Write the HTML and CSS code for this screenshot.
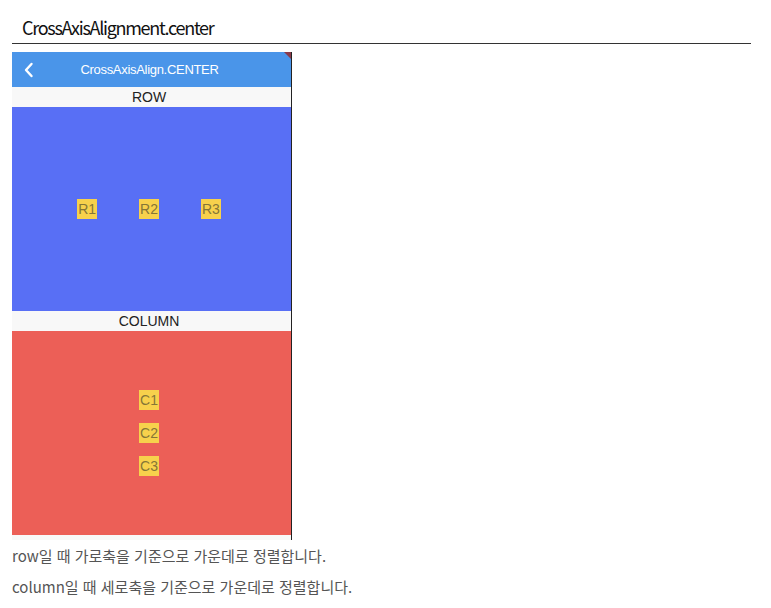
FILE: index.html
```html
<!DOCTYPE html>
<html lang="ko">
<head>
<meta charset="utf-8">
<link rel="stylesheet" href="styles.css">
</head>
<body>
<div class="page">
  <h3 class="title">CrossAxisAlignment.center</h3>
  <div class="phone">
    <div class="appbar">
      <svg class="back" width="12" height="16" viewBox="0 0 12 16"><path d="M8.5 2 L3 8 L8.5 14" fill="none" stroke="#fff" stroke-width="2.4" stroke-linecap="round" stroke-linejoin="round"/></svg>
      <span class="appbar-title">CrossAxisAlign.CENTER</span>
      <span class="debug"></span>
    </div>
    <div class="label">ROW</div>
    <div class="area area-row">
      <span class="chip">R1</span>
      <span class="chip">R2</span>
      <span class="chip">R3</span>
    </div>
    <div class="label">COLUMN</div>
    <div class="area area-col">
      <span class="chip">C1</span>
      <span class="chip">C2</span>
      <span class="chip">C3</span>
    </div>
    <div class="foot"></div>
  </div>
  <p class="desc">row일 때 가로축을 기준으로 가운데로 정렬합니다.</p>
  <p class="desc">column일 때 세로축을 기준으로 가운데로 정렬합니다.</p>
</div>
</body>
</html>
```
FILE: styles.css
```css
* { box-sizing: border-box; }
body {
  margin: 0;
  background: #fff;
  font-family: "Noto Sans CJK KR", "Noto Sans", sans-serif;
}
.page {
  width: 739px;
  margin-left: 12px;
  padding-top: 15px;
}
.title {
  margin: 0;
  padding: 0 0 4px 10px;
  font-size: 18px;
  font-weight: 400;
  line-height: 24px;
  color: #111;
  letter-spacing: -1.3px;
  border-bottom: 1px solid #333;
}
.phone {
  margin-top: 8px;
  width: 280px;
  border-right: 1px solid #222;
  display: flex;
  flex-direction: column;
  font-family: "Liberation Sans", Roboto, sans-serif;
}
.appbar {
  position: relative;
  height: 35px;
  background: #4a95e9;
  display: flex;
  align-items: center;
  padding-left: 11px;
}
.back { display: block; }
.appbar-title {
  flex: 1;
  text-align: center;
  color: #fff;
  font-size: 13px;
  letter-spacing: -0.3px;
  padding-right: 27px;
}
.debug {
  position: absolute;
  right: 0;
  top: 0;
  width: 0;
  height: 0;
  border-top: 7px solid #8a3a4a;
  border-left: 7px solid transparent;
}
.label {
  height: 20px;
  background: #f8f8f8;
  text-align: center;
  font-size: 14px;
  line-height: 20px;
  color: #222;
  padding-right: 5px;
}
.area {
  height: 204px;
  display: flex;
  align-items: center;
  justify-content: center;
  padding-right: 5px;
}
.area-row {
  background: #586ff5;
  gap: 42px;
}
.area-col {
  background: #ec5f57;
  flex-direction: column;
  gap: 13px;
}
.chip {
  display: block;
  height: 20px;
  line-height: 20px;
  padding: 0 1px;
  background: #f7d14c;
  color: #857637;
  font-size: 14px;
}
.foot {
  height: 5px;
  background: #f8f8f8;
}
.desc {
  margin: 0;
  font-size: 15px;
  line-height: 31px;
  color: #555;
}
```
